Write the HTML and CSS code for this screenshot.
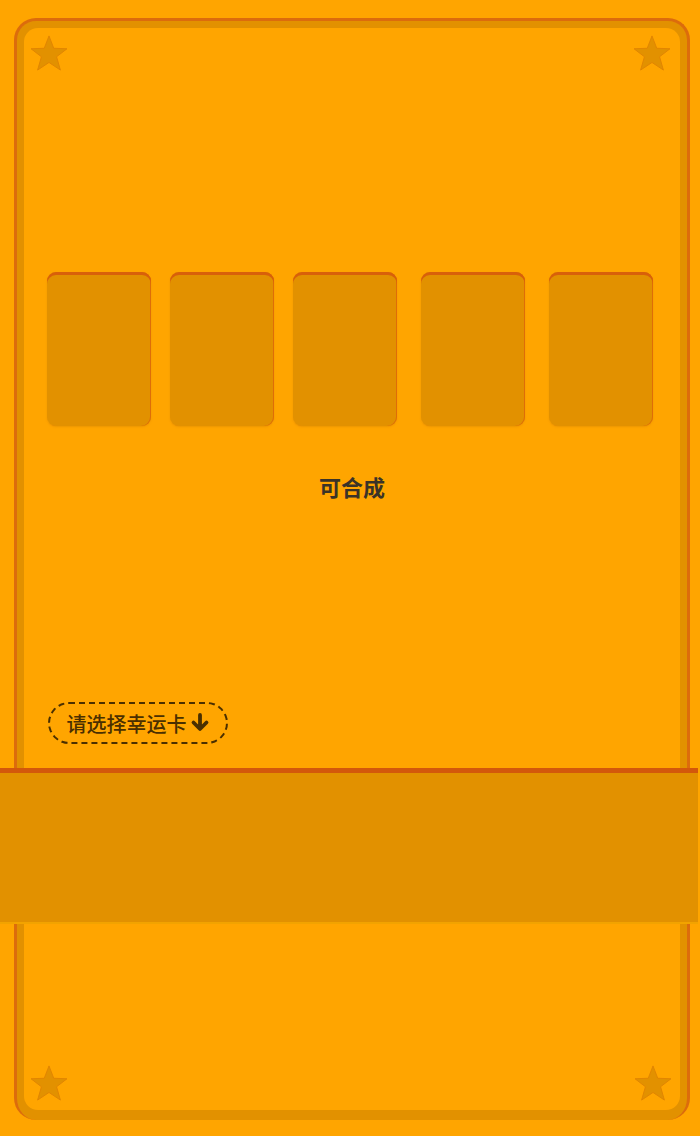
FILE: index.html
```html
<!DOCTYPE html>
<html lang="zh">
<head>
<meta charset="utf-8">
<link rel="stylesheet" href="styles.css">
</head>
<body>
<div class="page">
  <div class="frame">
    <div class="inner">
      <svg class="star star-tl" viewBox="0 0 40 38"><polygon points="20,1 25,14 39,14.5 28,23 32,37 20,29 8,37 12,23 1,14.5 15,14"/></svg>
      <svg class="star star-tr" viewBox="0 0 40 38"><polygon points="20,1 25,14 39,14.5 28,23 32,37 20,29 8,37 12,23 1,14.5 15,14"/></svg>
      <svg class="star star-bl" viewBox="0 0 40 38"><polygon points="20,1 25,14 39,14.5 28,23 32,37 20,29 8,37 12,23 1,14.5 15,14"/></svg>
      <svg class="star star-br" viewBox="0 0 40 38"><polygon points="20,1 25,14 39,14.5 28,23 32,37 20,29 8,37 12,23 1,14.5 15,14"/></svg>
      <div class="cards">
        <div class="card"></div>
        <div class="card"></div>
        <div class="card wide"></div>
        <div class="card wide"></div>
        <div class="card"></div>
      </div>
      <div class="merge">可合成</div>
      <div class="pick">请选择幸运卡<svg class="arrow" viewBox="0 0 20 20"><path d="M10 2 L10 15 M3.5 9.5 L10 16 L16.5 9.5" fill="none" stroke="#4a2f00" stroke-width="3.8" stroke-linecap="round" stroke-linejoin="round"/></svg></div>
    </div>
  </div>
  <div class="band"></div>
</div>
</body>
</html>
```
FILE: styles.css
```css
html, body {
  margin: 0;
  padding: 0;
  background: #ffa500;
}
.page {
  position: relative;
  width: 700px;
  height: 1136px;
  padding-top: 18px;
  box-sizing: border-box;
  font-family: "Noto Sans CJK SC", "Noto Sans", sans-serif;
}
.frame {
  margin-left: 14px;
  width: 676px;
  height: 1102px;
  box-sizing: border-box;
  border: 3px solid #dc6c0c;
  border-bottom: none;
  border-radius: 22px;
  background: #e29100;
  padding: 7px 7px 10px 7px;
}
.inner {
  position: relative;
  height: 100%;
  background: #ffa500;
  border-radius: 14px;
  padding: 244px 0 0 23px;
  box-sizing: border-box;
}
.star {
  position: absolute;
  width: 38px;
  height: 36px;
}
.star polygon {
  fill: #e29100;
  stroke: #e08400;
  stroke-width: 1;
}
.star-tl { left: 6px; top: 7px; }
.star-tr { right: 9px; top: 7px; }
.star-bl { left: 6px; bottom: 9px; }
.star-br { right: 8px; bottom: 9px; }
.cards {
  display: flex;
  height: 154px;
}
.card {
  width: 104px;
  height: 154px;
  margin-right: 19px;
  background: #e29100;
  border-radius: 9px;
  box-shadow: inset 0 3px 0 #d8600a, inset -1px 0 0 #de6d08, 0 1px 2px rgba(200,120,0,0.35);
}
.card.wide { margin-right: 24px; }
.merge {
  margin-top: 45px;
  margin-left: -23px;
  text-align: center;
  font-size: 22px;
  font-weight: 700;
  color: #3a3328;
  line-height: 30px;
}
.pick {
  margin-top: 201px;
  margin-left: 1px;
  width: 180px;
  height: 42px;
  box-sizing: border-box;
  border: 2px dashed #4a2f00;
  border-radius: 21px;
  display: flex;
  align-items: center;
  justify-content: center;
  font-size: 20px;
  font-weight: 500;
  color: #4a2f00;
}
.arrow {
  width: 20px;
  height: 20px;
  margin-left: 3px;
}
.band {
  position: absolute;
  left: 0;
  top: 768px;
  width: 698px;
  height: 156px;
  box-sizing: border-box;
  background: #e29100;
  border-top: 5px solid #d3580b;
  border-bottom: 2px solid #f2a300;
}
```
